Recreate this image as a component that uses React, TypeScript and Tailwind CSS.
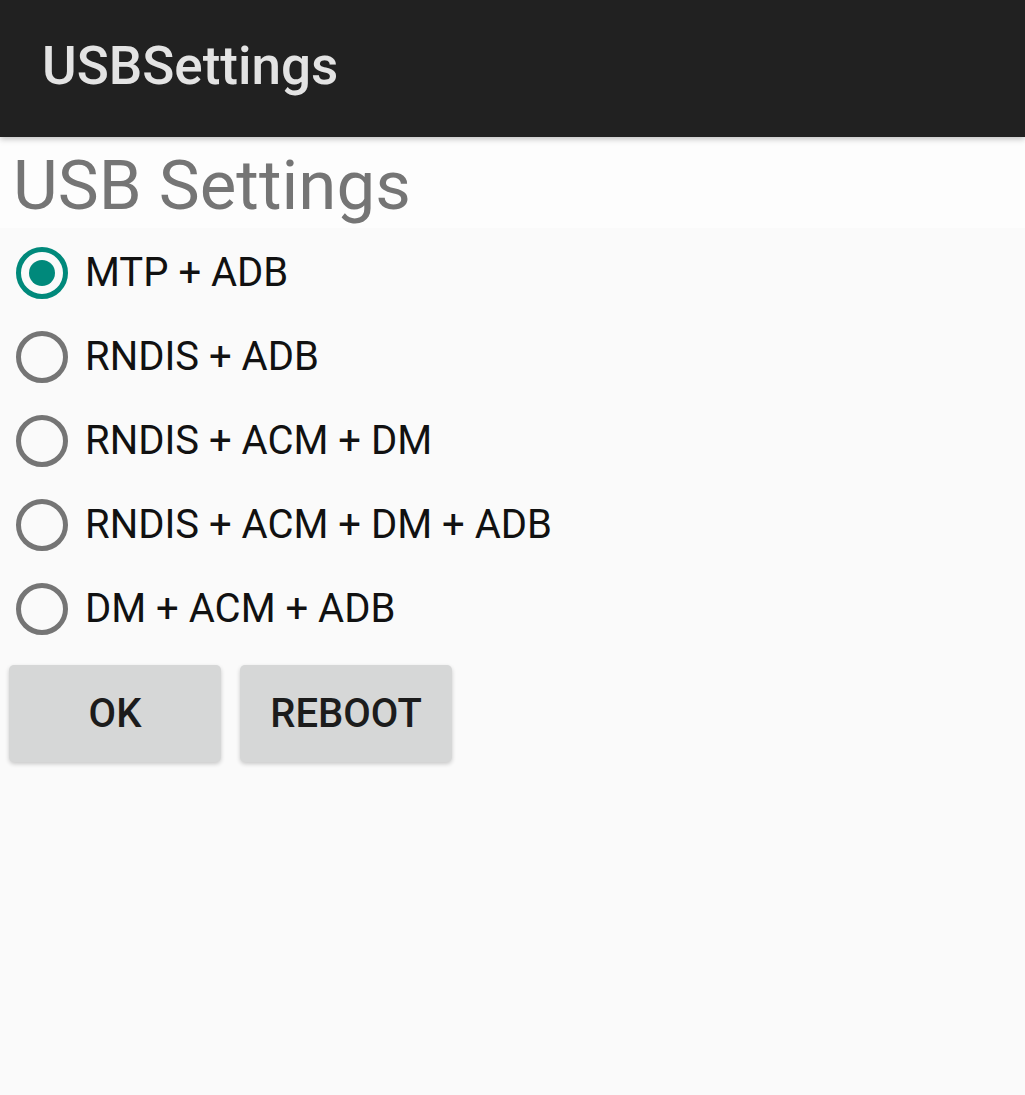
const options = ['MTP + ADB', 'RNDIS + ADB', 'RNDIS + ACM + DM', 'RNDIS + ACM + DM + ADB', 'DM + ACM + ADB']

function Radio({ checked }: { checked: boolean }) {
  return (
    <span
      className={`w-[52px] h-[52px] rounded-full border-[5px] flex items-center justify-center flex-shrink-0 ${
        checked ? 'border-[#00897b]' : 'border-[#757575]'
      }`}
    >
      {checked && <span className="w-[26px] h-[26px] rounded-full bg-[#00897b]" />}
    </span>
  )
}

export default function App() {
  return (
    <div className="w-[1025px] h-[1095px] bg-[#fafafa] overflow-hidden" style={{ fontFamily: 'Roboto, "Noto Sans", sans-serif' }}>
      <header className="h-[137px] bg-[#212121] flex items-center pl-[42px] relative z-10 shadow-[0_2px_6px_rgba(0,0,0,0.25)]">
        <h1 className="text-[#e3e3e3] text-[53px] font-medium leading-none -mt-[4px]">USBSettings</h1>
      </header>

      <div className="bg-[#fdfdfd] h-[91px] pl-[13px] flex items-center">
        <h2 className="text-[#757575] text-[69px] leading-none mt-[6px]">USB Settings</h2>
      </div>

      <div className="flex flex-col pl-[16px] pt-[3px]">
        {options.map((label, i) => (
          <label key={label} className="h-[84px] flex items-center gap-[17px]">
            <Radio checked={i === 0} />
            <span className="text-[40px] text-[#111] leading-none">{label}</span>
          </label>
        ))}
      </div>

      <div className="flex gap-[19px] pl-[9px] mt-[14px]">
        {['OK', 'REBOOT'].map((t) => (
          <button
            key={t}
            className="w-[212px] h-[97px] rounded-[5px] bg-[#d6d7d7] shadow-[0_2px_4px_rgba(0,0,0,0.2)] text-[40px] font-medium text-[#1c1c1c] flex items-center justify-center"
          >
            {t}
          </button>
        ))}
      </div>
    </div>
  )
}
